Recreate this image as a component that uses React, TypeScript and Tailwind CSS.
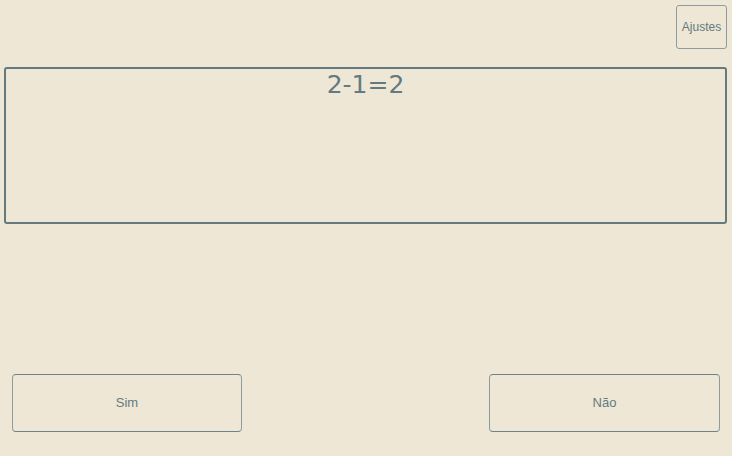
import React from 'react'

const App: React.FC = () => {
    return (
        <div className="w-[732px] h-[456px] bg-[#efe7d6] flex flex-col text-[#627a80] font-['Liberation_Sans',Arial,sans-serif] overflow-hidden">
            <div className="flex justify-end pt-[5px] pr-[5px]">
                <button className="w-[51px] h-[44px] border border-[#8c9c9e] rounded-[3px] text-[12px] flex items-center justify-center">
                    Ajustes
                </button>
            </div>
            <div className="mt-[18px] mx-[4px] mr-[5px] h-[157px] border-2 border-[#627a80] rounded-[3px] flex justify-center">
                <p className="font-['DejaVu_Sans',Verdana,sans-serif] text-[25px] leading-[30px] pt-[1px]">2-1=2</p>
            </div>
            <div className="mt-[150px] flex justify-between px-[12px]">
                <button className="w-[230px] h-[58px] border border-[#8c9c9e] border-t-[#6e8489] border-b-[#6e8489] rounded-[4px] text-[13px] flex items-center justify-center">
                    Sim
                </button>
                <button className="w-[231px] h-[58px] border border-[#8c9c9e] border-t-[#6e8489] border-b-[#6e8489] rounded-[4px] text-[13px] flex items-center justify-center">
                    Não
                </button>
            </div>
        </div>
    )
}

export default App
